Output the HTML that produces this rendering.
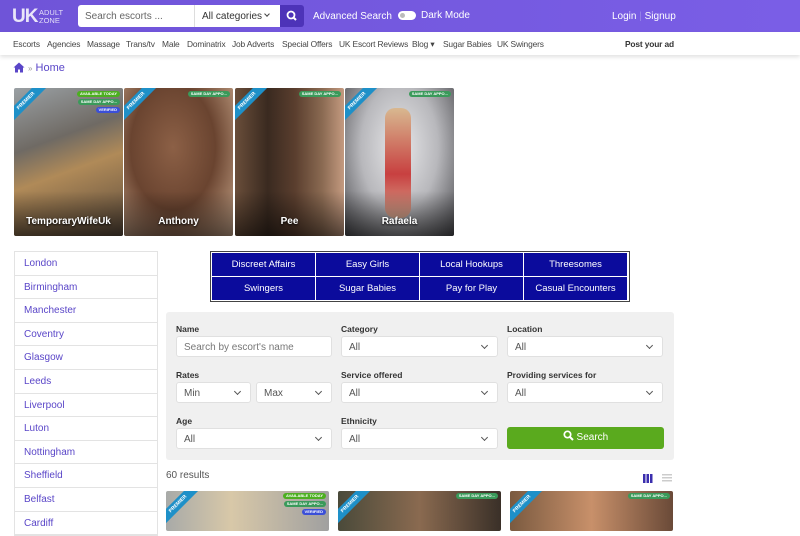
<!DOCTYPE html>
<html><head><meta charset="utf-8"><style>
*{box-sizing:border-box;margin:0;padding:0}
body{width:800px;height:530px;overflow:hidden;font-family:"Liberation Sans",sans-serif;background:#fff;position:relative;font-size:11px;color:#333}
.hdr{position:absolute;left:0;top:0;width:800px;height:32px;background:linear-gradient(90deg,#6f54d8,#7a5ee6)}
.abs{position:absolute}
.nav{position:absolute;top:32px;left:0;width:800px;height:23px;background:#fff;box-shadow:0 2px 4px rgba(0,0,0,.12);font-size:8.4px;color:#444;letter-spacing:-0.15px}
.nav span{position:absolute;top:7px;white-space:nowrap}
.card{position:absolute;top:88px;width:109px;height:148px;border-radius:2px;overflow:hidden}
.card .nm{position:absolute;bottom:9px;width:100%;text-align:center;color:#fff;font-weight:bold;font-size:10px;text-shadow:0 1px 2px #000;z-index:2}
.card:after{content:"";position:absolute;left:0;right:0;bottom:0;height:45px;background:linear-gradient(transparent,rgba(0,0,0,.55))}
.rib{position:absolute;left:-14px;top:8px;width:52px;height:10px;background:#1e90c8;color:#fff;font-size:5px;font-weight:bold;text-align:center;line-height:10px;transform:rotate(-45deg);z-index:3}
.tag{position:absolute;right:3px;height:6px;font-size:4px;color:#fff;border-radius:3px;padding:0 3px;line-height:6px;z-index:3;font-weight:bold}
.side{position:absolute;left:14px;top:251px;width:144px;border:1px solid #e3e3e3}
.side div{height:23.6px;border-bottom:1px solid #e3e3e3;color:#5a46c8;font-size:10px;padding:6px 0 0 9px}
.ban{position:absolute;left:210px;top:251px;width:420px;height:51px;border:1px solid #444;background:#fff;padding:1px}
.ban div{position:absolute;width:103px;height:23px;background:#0b0b9c;color:#fff;font-size:9.5px;text-align:center;line-height:23px}
.panel{position:absolute;left:166px;top:312px;width:508px;height:148px;background:#f0f0f0;border-radius:3px}
.lbl{position:absolute;font-size:8.5px;font-weight:bold;color:#333}
.inp{position:absolute;height:21px;background:#fff;border:1px solid #e0e0e0;border-radius:3px;font-size:10px;color:#555;padding:5px 0 0 7px}
.inp.s:after{content:"";position:absolute;right:10px;top:6px;width:4px;height:4px;border-right:1px solid #555;border-bottom:1px solid #555;transform:rotate(45deg)}
.rc{position:absolute;top:491px;width:163px;height:40px;overflow:hidden;border-radius:2px}
</style></head><body>
<div class="hdr">
 <div class="abs" style="left:12px;top:6px;color:#fff;font-weight:900;font-size:19px;letter-spacing:-1px;opacity:.85">UK</div>
 <div class="abs" style="left:39px;top:9px;color:#fff;font-size:7.5px;line-height:8px;opacity:.8">ADULT<br>ZONE</div>
 <div class="abs" style="left:78px;top:5px;width:116px;height:22px;background:#fff;border-radius:3px 0 0 3px;font-size:10px;color:#666;padding:6px 0 0 7px">Search escorts ...</div>
 <div class="abs" style="left:194px;top:5px;width:86px;height:22px;background:#fff;border-left:1px solid #ddd;font-size:10px;color:#333;padding:6px 0 0 7px">All categories</div>
 <div class="abs" style="left:265px;top:12px;width:4px;height:4px;border-right:1px solid #444;border-bottom:1px solid #444;transform:rotate(45deg)"></div>
 <div class="abs" style="left:280px;top:5px;width:24px;height:22px;background:#4d33b8;border-radius:0 3px 3px 0"><svg width="24" height="22"><circle cx="11" cy="10" r="3.5" stroke="#fff" stroke-width="1.8" fill="none"/><line x1="13.5" y1="12.5" x2="16" y2="15" stroke="#fff" stroke-width="2"/></svg></div>
 <div class="abs" style="left:313px;top:11px;color:#fff;font-size:10px">Advanced Search</div>
 <div class="abs" style="left:398px;top:11px;width:18px;height:9px;background:#fff;border-radius:5px"><div style="position:absolute;left:2px;top:2px;width:5px;height:5px;border-radius:50%;background:#bbb"></div></div>
 <div class="abs" style="left:421px;top:10px;color:#fff;font-size:10px">Dark Mode</div>
 <div class="abs" style="left:612px;top:11px;color:#fff;font-size:10px">Login <span style="color:#9a88e8">|</span> Signup</div>
</div>
<div class="nav">
<span style="left:13px">Escorts</span><span style="left:47px">Agencies</span><span style="left:87px">Massage</span><span style="left:126px">Trans/tv</span><span style="left:162px">Male</span><span style="left:187px">Dominatrix</span><span style="left:232px">Job Adverts</span><span style="left:282px">Special Offers</span><span style="left:339px">UK Escort Reviews</span><span style="left:412px">Blog ▾</span><span style="left:443px">Sugar Babies</span><span style="left:497px">UK Swingers</span><span style="left:625px;font-weight:bold;color:#333">Post your ad</span>
</div>
<svg class="abs" style="left:13px;top:62px" width="12" height="11" viewBox="0 0 12 11"><path d="M6 0.5 L0.5 5.5 L2 5.5 L2 10.5 L5 10.5 L5 7.5 L7 7.5 L7 10.5 L10 10.5 L10 5.5 L11.5 5.5 Z" fill="#5a46c8"/></svg>
<div class="abs" style="left:28px;top:62px;font-size:11px;color:#5a46c8"><span style="color:#999;font-size:8px">»</span> Home</div>

<div class="card" style="left:14px;background:linear-gradient(160deg,#9aa0a4 0%,#6f6a64 35%,#b08a58 55%,#5a4a3c 100%)"><div class="rib">PREMIER</div><div class="tag" style="top:3px;background:#4caf20">AVAILABLE TODAY</div><div class="tag" style="top:11px;background:#3a9a5a">SAME DAY APPO...</div><div class="tag" style="top:19px;background:#3b4fd8">VERIFIED</div><div class="nm">TemporaryWifeUk</div></div>
<div class="card" style="left:124px;background:radial-gradient(ellipse at 45% 40%,#8c6046 0%,#6a4430 50%,#caa88c 100%)"><div class="rib">PREMIER</div><div class="tag" style="top:3px;background:#3a9a5a">SAME DAY APPO...</div><div class="nm">Anthony</div></div>
<div class="card" style="left:235px;background:linear-gradient(90deg,#6a4e3a 0%,#3a2a20 30%,#5a3e2e 55%,#8a6a52 80%,#c49a80 100%)"><div class="rib">PREMIER</div><div class="tag" style="top:3px;background:#3a9a5a">SAME DAY APPO...</div><div class="nm">Pee</div></div>
<div class="card" style="left:345px;background:radial-gradient(ellipse at 50% 40%,#e8e8ea 0%,#b8b8bc 50%,#4a4a4e 100%)"><div class="abs" style="left:40px;top:20px;width:26px;height:110px;background:linear-gradient(#d8b890,#c84040 60%,#d8a890);border-radius:10px"></div><div class="rib">PREMIER</div><div class="tag" style="top:3px;background:#3a9a5a">SAME DAY APPO...</div><div class="nm">Rafaela</div></div>

<div class="side"><div>London</div><div>Birmingham</div><div>Manchester</div><div>Coventry</div><div>Glasgow</div><div>Leeds</div><div>Liverpool</div><div>Luton</div><div>Nottingham</div><div>Sheffield</div><div>Belfast</div><div>Cardiff</div></div>

<div class="ban">
<div style="left:1px;top:1px">Discreet Affairs</div><div style="left:105px;top:1px">Easy Girls</div><div style="left:209px;top:1px">Local Hookups</div><div style="left:313px;top:1px">Threesomes</div>
<div style="left:1px;top:25px">Swingers</div><div style="left:105px;top:25px">Sugar Babies</div><div style="left:209px;top:25px">Pay for Play</div><div style="left:313px;top:25px">Casual Encounters</div>
</div>

<div class="panel">
<div class="lbl" style="left:10px;top:12px">Name</div><div class="lbl" style="left:175px;top:12px">Category</div><div class="lbl" style="left:341px;top:12px">Location</div>
<div class="inp" style="left:10px;top:24px;width:156px;color:#777">Search by escort's name</div>
<div class="inp s" style="left:175px;top:24px;width:157px">All</div>
<div class="inp s" style="left:341px;top:24px;width:156px">All</div>
<div class="lbl" style="left:10px;top:58px">Rates</div><div class="lbl" style="left:175px;top:58px">Service offered</div><div class="lbl" style="left:341px;top:58px">Providing services for</div>
<div class="inp s" style="left:10px;top:70px;width:75px">Min</div>
<div class="inp s" style="left:90px;top:70px;width:76px">Max</div>
<div class="inp s" style="left:175px;top:70px;width:157px">All</div>
<div class="inp s" style="left:341px;top:70px;width:156px">All</div>
<div class="lbl" style="left:10px;top:104px">Age</div><div class="lbl" style="left:175px;top:104px">Ethnicity</div>
<div class="inp s" style="left:10px;top:116px;width:156px">All</div>
<div class="inp s" style="left:175px;top:116px;width:157px">All</div>
<div class="abs" style="left:341px;top:115px;width:157px;height:22px;background:#5aaa1e;border-radius:3px;color:#fff;font-size:10px;text-align:center;line-height:22px"><svg width="11" height="11" style="vertical-align:-1px"><circle cx="4.5" cy="4.5" r="3.2" stroke="#fff" stroke-width="1.7" fill="none"/><line x1="7" y1="7" x2="10" y2="10" stroke="#fff" stroke-width="2"/></svg> Search</div>
</div>

<div class="abs" style="left:166px;top:470px;font-size:10px;color:#555">60 results</div>
<div class="abs" style="left:643px;top:474px;width:10px;height:9px;background:repeating-linear-gradient(90deg,#3b2fae 0 2.5px,transparent 2.5px 3.5px)"></div>
<div class="abs" style="left:662px;top:474px;width:10px;height:9px;background:repeating-linear-gradient(#ccc 0 1.5px,transparent 1.5px 3px)"></div>

<div class="rc" style="left:166px;background:linear-gradient(90deg,#a8aaa8,#d8c8a8 40%,#a0a0a0)"><div class="rib">PREMIER</div><div class="tag" style="top:2px;background:#4caf20">AVAILABLE TODAY</div><div class="tag" style="top:10px;background:#3a9a5a">SAME DAY APPO...</div><div class="tag" style="top:18px;background:#3b4fd8">VERIFIED</div></div>
<div class="rc" style="left:338px;background:linear-gradient(90deg,#4a4a3a,#8a6a50 50%,#3a3028)"><div class="rib">PREMIER</div><div class="tag" style="top:2px;background:#3a9a5a">SAME DAY APPO...</div></div>
<div class="rc" style="left:510px;background:linear-gradient(90deg,#7a5a40,#c8906a 50%,#6a4a38)"><div class="rib">PREMIER</div><div class="tag" style="top:2px;background:#3a9a5a">SAME DAY APPO...</div></div>
</body></html>
